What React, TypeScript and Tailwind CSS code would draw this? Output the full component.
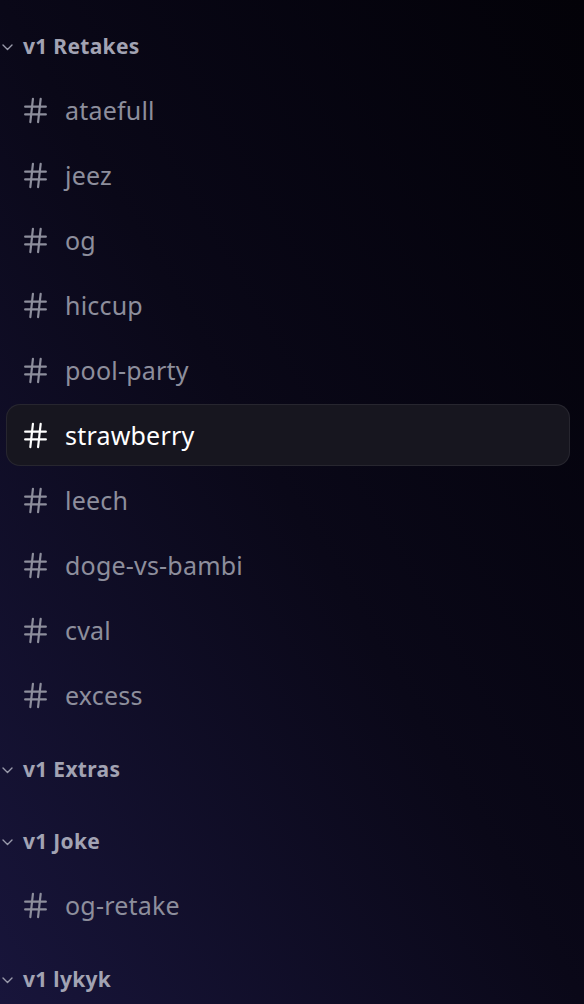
import { Hash } from 'lucide-react';

const sections = [
  {
    id: 'retakes',
    title: 'v1 Retakes',
    channels: [
      'ataefull',
      'jeez',
      'og',
      'hiccup',
      'pool-party',
      'strawberry',
      'leech',
      'doge-vs-bambi',
      'cval',
      'excess'
    ]
  },
  { id: 'extras', title: 'v1 Extras', channels: [] as string[] },
  { id: 'joke', title: 'v1 Joke', channels: ['og-retake'] },
  { id: 'lykyk', title: 'v1 lykyk', channels: [] as string[] }
];

const activeChannel = 'strawberry';

export default function App() {
  return (
    <div className="h-[1004px] w-full overflow-hidden bg-linear-to-bl from-[#030208] via-[#0a0818] to-[#18153b] font-['Noto_Sans',sans-serif]">
      <nav className="flex flex-col pt-[3px]">
        {sections.map((section) => (
          <Section key={section.id} title={section.title} channels={section.channels} />
        ))}
      </nav>
    </div>
  );
}

function Section({ title, channels }: { title: string; channels: string[] }) {
  return (
    <section className="flex flex-col pt-[29px]">
      <button className="flex h-[28px] items-center gap-[10px] pl-[2px] text-left">
        {/* small collapse caret */}
        <svg width="11" height="7" viewBox="0 0 11 7" fill="none" className="mt-[2px] text-[#9a9bab]">
          <path d="M1 1l4.5 4.5L10 1" stroke="currentColor" strokeWidth="1.4" strokeLinecap="round" strokeLinejoin="round" />
        </svg>
        <span className="text-[21px] leading-none font-bold tracking-[0.3px] text-[#a2a3b3]">
          {title}
        </span>
      </button>

      {channels.length > 0 ? (
        <ul className="mt-[19px] flex flex-col gap-[3px]">
          {channels.map((name) => (
            <ChannelRow key={name} name={name} active={name === activeChannel} />
          ))}
        </ul>
      ) : (
        <div className="h-[15px]" />
      )}
    </section>
  );
}

function ChannelRow({ name, active }: { name: string; active: boolean }) {
  return (
    <li
      className={
        active
          ? 'mr-[14px] ml-[6px] flex h-[62px] items-center gap-[14px] rounded-[14px] border border-white/[0.07] bg-[#17161f] pl-[13px] text-white'
          : 'mr-[14px] ml-[6px] flex h-[62px] items-center gap-[14px] rounded-[14px] border border-transparent pl-[13px] text-[#8d8e9c]'
      }
    >
      <Hash className="h-[31px] w-[31px]" strokeWidth={1.7} />
      <span className="text-[25px] leading-none tracking-[0.2px]">{name}</span>
    </li>
  );
}
